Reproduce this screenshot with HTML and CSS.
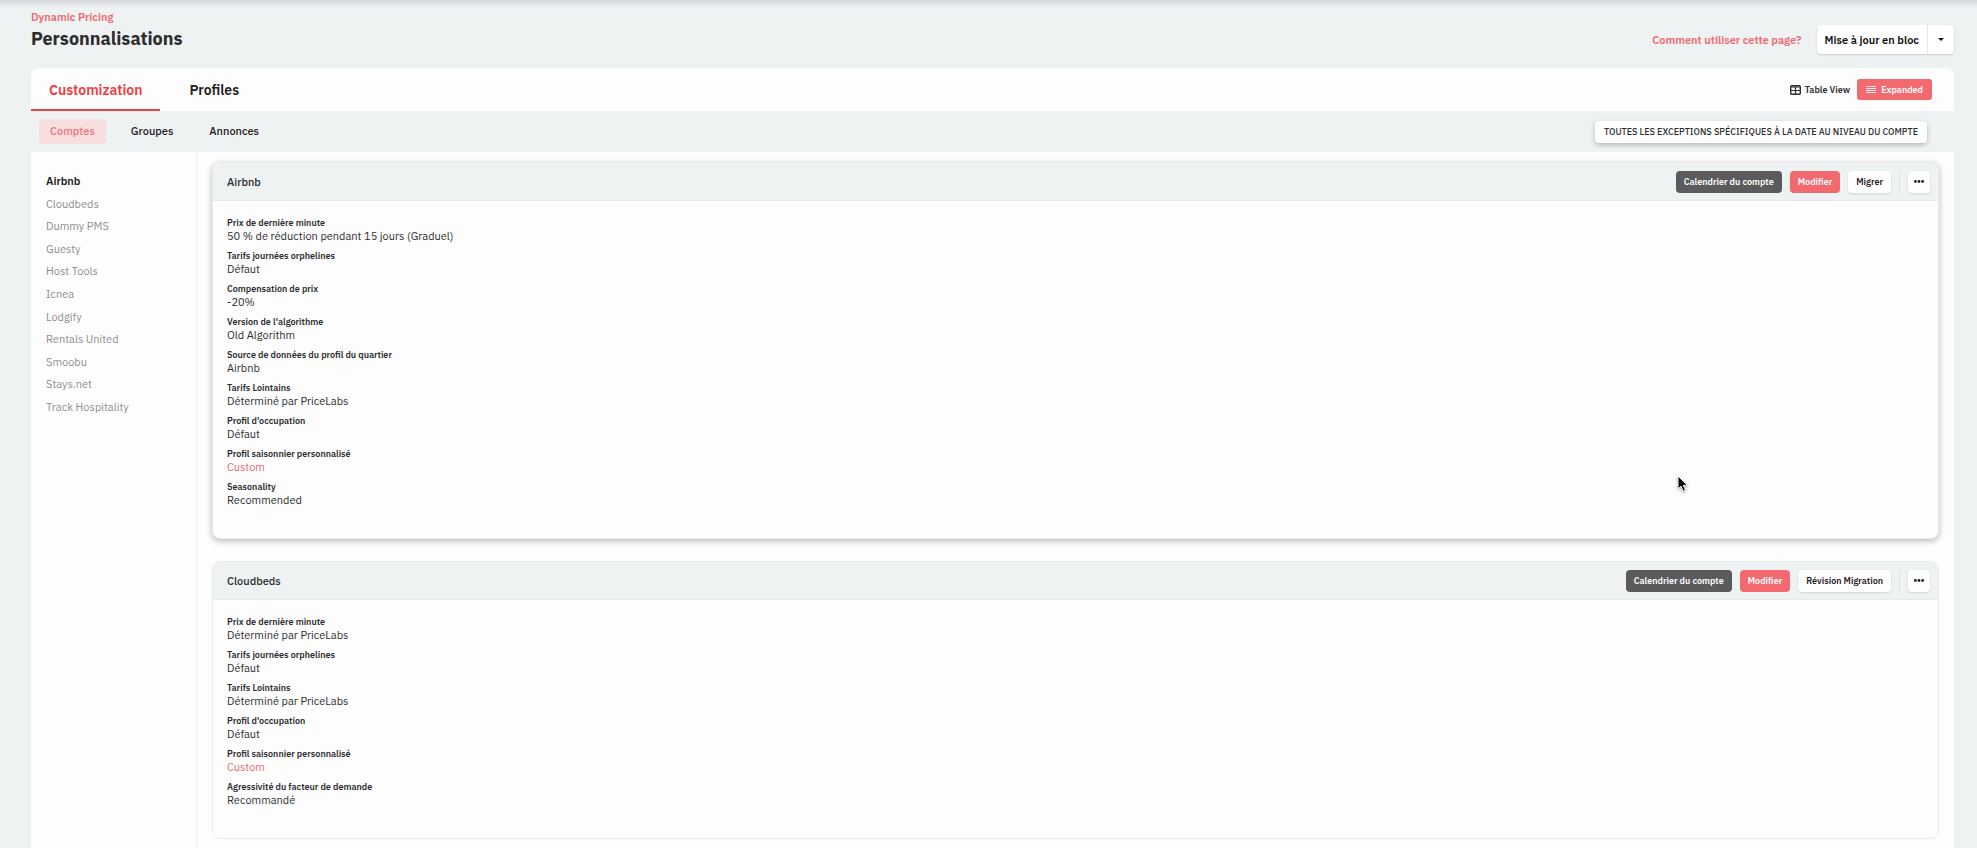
FILE: index.html
```html
<!DOCTYPE html>
<html lang="fr">
<head>
    <meta charset="UTF-8">
    <meta name="viewport" content="width=device-width, initial-scale=1.0">
    <title>Personnalisations</title>
    <link rel="stylesheet" href="styles.css">
</head>
<body>
    <header class="page-header">
        <div>
            <a class="breadcrumb" href="#">Dynamic Pricing</a>
            <h1>Personnalisations</h1>
        </div>
        <div class="header-actions">
            <a class="help-link" href="#">Comment utiliser cette page?</a>
            <div class="split-button">
                <button type="button" class="split-main">Mise à jour en bloc</button>
                <button type="button" class="split-caret" aria-label="Plus d'options">
                    <svg width="6" height="3" viewBox="0 0 6 3"><path d="M0 0h6L3 3z" fill="currentColor"/></svg>
                </button>
            </div>
        </div>
    </header>
    <main class="panel">
        <div class="tabs">
            <nav class="tab-list">
                <a class="tab active" href="#">Customization</a>
                <a class="tab" href="#">Profiles</a>
            </nav>
            <div class="view-switch">
                <button type="button" class="view-button">
                    <svg width="11" height="10" viewBox="0 0 11 10" fill="none" stroke="currentColor"><rect x="0.7" y="0.7" width="9.6" height="8.6" rx="1" stroke-width="1.4"/><path d="M1 2h9" stroke-width="1"/><path d="M1 5.5h9M5.5 2v7" stroke-width="1.2"/></svg>
                    Table View
                </button>
                <button type="button" class="view-button selected">
                    <svg width="10" height="7" viewBox="0 0 10 7" fill="none" stroke="currentColor"><path d="M0 0.5h10M0 2.5h10M0 4.5h10M0 6.5h10" stroke-opacity="0.85"/></svg>
                    Expanded
                </button>
            </div>
        </div>
        <div class="subnav">
            <nav class="subnav-list">
                <a class="subnav-link active" href="#">Comptes</a>
                <a class="subnav-link" href="#">Groupes</a>
                <a class="subnav-link" href="#">Annonces</a>
            </nav>
            <button type="button" class="overrides-button">TOUTES LES EXCEPTIONS SPÉCIFIQUES À LA DATE AU NIVEAU DU COMPTE</button>
        </div>
        <div class="content">
            <aside class="sidebar">
                <ul>
                    <li><a class="active" href="#airbnb">Airbnb</a></li>
                    <li><a href="#cloudbeds">Cloudbeds</a></li>
                    <li><a href="#">Dummy PMS</a></li>
                    <li><a href="#">Guesty</a></li>
                    <li><a href="#">Host Tools</a></li>
                    <li><a href="#">Icnea</a></li>
                    <li><a href="#">Lodgify</a></li>
                    <li><a href="#">Rentals United</a></li>
                    <li><a href="#">Smoobu</a></li>
                    <li><a href="#">Stays.net</a></li>
                    <li><a href="#">Track Hospitality</a></li>
                </ul>
            </aside>
            <div class="cards">
                <section class="card raised" id="airbnb">
                    <div class="card-header">
                        <h2>Airbnb</h2>
                        <div class="card-actions">
                            <button type="button" class="btn btn-dark">Calendrier du compte</button>
                            <button type="button" class="btn btn-red">Modifier</button>
                            <button type="button" class="btn btn-white">Migrer</button>
                            <span class="divider"></span>
                            <button type="button" class="btn-more" aria-label="Plus">
                                <svg width="10" height="3" viewBox="0 0 10 3" fill="currentColor"><circle cx="1.4" cy="1.5" r="1.4"/><circle cx="5" cy="1.5" r="1.4"/><circle cx="8.6" cy="1.5" r="1.4"/></svg>
                            </button>
                        </div>
                    </div>
                    <dl class="settings">
                        <div><dt>Prix de dernière minute</dt><dd>50 % de réduction pendant 15 jours (Graduel)</dd></div>
                        <div><dt>Tarifs journées orphelines</dt><dd>Défaut</dd></div>
                        <div><dt>Compensation de prix</dt><dd>-20%</dd></div>
                        <div><dt>Version de l'algorithme</dt><dd>Old Algorithm</dd></div>
                        <div><dt>Source de données du profil du quartier</dt><dd>Airbnb</dd></div>
                        <div><dt>Tarifs Lointains</dt><dd>Déterminé par PriceLabs</dd></div>
                        <div><dt>Profil d'occupation</dt><dd>Défaut</dd></div>
                        <div><dt>Profil saisonnier personnalisé</dt><dd><a href="#">Custom</a></dd></div>
                        <div><dt>Seasonality</dt><dd>Recommended</dd></div>
                    </dl>
                </section>
                <section class="card" id="cloudbeds">
                    <div class="card-header">
                        <h2>Cloudbeds</h2>
                        <div class="card-actions">
                            <button type="button" class="btn btn-dark">Calendrier du compte</button>
                            <button type="button" class="btn btn-red">Modifier</button>
                            <button type="button" class="btn btn-white">Révision Migration</button>
                            <span class="divider"></span>
                            <button type="button" class="btn-more" aria-label="Plus">
                                <svg width="10" height="3" viewBox="0 0 10 3" fill="currentColor"><circle cx="1.4" cy="1.5" r="1.4"/><circle cx="5" cy="1.5" r="1.4"/><circle cx="8.6" cy="1.5" r="1.4"/></svg>
                            </button>
                        </div>
                    </div>
                    <dl class="settings">
                        <div><dt>Prix de dernière minute</dt><dd>Déterminé par PriceLabs</dd></div>
                        <div><dt>Tarifs journées orphelines</dt><dd>Défaut</dd></div>
                        <div><dt>Tarifs Lointains</dt><dd>Déterminé par PriceLabs</dd></div>
                        <div><dt>Profil d'occupation</dt><dd>Défaut</dd></div>
                        <div><dt>Profil saisonnier personnalisé</dt><dd><a href="#">Custom</a></dd></div>
                        <div><dt>Agressivité du facteur de demande</dt><dd>Recommandé</dd></div>
                    </dl>
                </section>
            </div>
        </div>
    </main>
    <svg class="cursor" width="12" height="18" viewBox="0 0 12 18"><path d="M1 1v13l3-2.8 2.2 5.1 2.3-1-2.2-5h4.2z" fill="#000" stroke="#fff" stroke-width="1"/></svg>
</body>
</html>
```

FILE: styles.css
```css
* {
    box-sizing: border-box;
}

body {
    margin: 0;
    height: 100vh;
    display: flex;
    flex-direction: column;
    overflow: hidden;
    padding: 0 23px 0 31px;
    background: linear-gradient(#d3d5d9, #eff2f3 8px);
    color: #2b2d2e;
    font-family: "IBM Plex Sans", Roboto, sans-serif;
    font-size: 11px;
}

a {
    color: inherit;
    text-decoration: none;
}

button {
    border: none;
    padding: 0;
    background: none;
    color: inherit;
    font: inherit;
    font-weight: 600;
    cursor: pointer;
}

h1, h2, ul, dl, dd {
    margin: 0;
    padding: 0;
}

.page-header {
    flex-shrink: 0;
    display: flex;
    justify-content: space-between;
    align-items: flex-start;
    height: 68px;
    padding-top: 10px;
}

.breadcrumb {
    display: block;
    color: #ef6a70;
    font-weight: 600;
    line-height: 15px;
}

h1 {
    font-size: 18px;
    font-weight: 700;
    line-height: 28px;
}

.header-actions {
    display: flex;
    align-items: center;
    gap: 15px;
    padding-top: 15px;
}

.help-link {
    color: #ef6a70;
    font-size: 11px;
    font-weight: 600;
}

.split-button {
    display: flex;
    height: 29px;
    border-radius: 4px;
    background-color: #fff;
    box-shadow: 0 1px 2px #c8cbcc;
    color: #111;
}

.split-main {
    padding: 0 8px;
    border-right: 1px solid #e6e8e8;
}

.split-caret {
    display: flex;
    align-items: center;
    justify-content: center;
    width: 26px;
}

.panel {
    flex: 1 0 auto;
    display: flex;
    flex-direction: column;
    border-radius: 8px 8px 0 0;
    background-color: #fefdfe;
}

.tabs {
    display: flex;
    justify-content: space-between;
    align-items: center;
    height: 43px;
    padding-right: 22px;
}

.tab-list {
    display: flex;
    align-self: stretch;
}

.tab {
    display: flex;
    align-items: center;
    padding: 3px 18px 0;
    margin-right: 11px;
    border-bottom: 2px solid transparent;
    color: #1f2021;
    font-size: 14px;
    font-weight: 600;
}

.tab.active {
    border-bottom-color: #e8454a;
    color: #f23a40;
}

.view-switch {
    display: flex;
    align-items: center;
    gap: 7px;
}

.view-button {
    display: flex;
    align-items: center;
    gap: 4px;
    height: 21px;
    font-size: 9px;
}

.view-button.selected {
    gap: 5px;
    padding: 0 9px;
    border-radius: 3px;
    background-color: #f2696f;
    color: #fff;
}

.subnav {
    display: flex;
    justify-content: space-between;
    align-items: center;
    height: 41px;
    padding: 0 27px 0 8px;
    background-color: #eff2f3;
}

.subnav-list {
    display: flex;
    gap: 14px;
}

.subnav-link {
    padding: 0 11px;
    border-radius: 3px;
    color: #1f2021;
    font-weight: 500;
    line-height: 25px;
}

.subnav-link.active {
    background-color: #f8dfdf;
    color: #ef7378;
}

.overrides-button {
    height: 22px;
    padding: 0 9px;
    border-radius: 4px;
    background-color: #fff;
    box-shadow: 0 2px 5px #b4b7b8;
    font-size: 9px;
    font-weight: 500;
}

.content {
    flex: 1;
    display: flex;
}

.sidebar {
    width: 166px;
    padding: 18px 15px;
    border-right: 1px solid #eceeef;
}

.sidebar ul {
    display: grid;
    grid-auto-rows: 1fr;
    align-items: center;
    min-height: 248px;
    list-style: none;
    color: #8c8e8f;
}

.sidebar .active {
    color: #1f2021;
    font-weight: 600;
}

.cards {
    flex: 1;
    display: flex;
    flex-direction: column;
    gap: 22px;
    padding: 10px 15px 9px;
}

.card {
    border: 1px solid #e9eced;
    border-radius: 8px;
    background-color: #fefdfe;
}

.card.raised {
    box-shadow: 0 2px 6px #b5b7b7;
}

.card-header {
    display: flex;
    justify-content: space-between;
    align-items: center;
    height: 38px;
    padding: 0 8px 0 14px;
    border-bottom: 1px solid #e6e9ea;
    border-radius: 7px 7px 0 0;
    background-color: #eff2f3;
}

.card-header h2 {
    font-size: 11px;
    font-weight: 500;
}

.card-actions {
    display: flex;
    align-items: center;
    gap: 8px;
}

.btn,
.btn-more {
    height: 22px;
    border-radius: 4px;
    font-size: 9px;
}

.btn {
    padding: 0 8px;
}

.btn-dark {
    background-color: #5b5a5c;
    color: #fff;
}

.btn-red {
    background-color: #f2696f;
    color: #fff;
}

.btn-white,
.btn-more {
    background-color: #fff;
    box-shadow: 0 1px 2px #d0d3d4;
    color: #1f2021;
}

.btn-more {
    display: flex;
    align-items: center;
    justify-content: center;
    width: 22px;
}

.divider {
    width: 1px;
    height: 22px;
    background-color: #dfe2e3;
}

.settings {
    display: flex;
    flex-direction: column;
    gap: 6px;
    padding: 15px 14px 31px;
}

.settings dt {
    font-size: 9px;
    font-weight: 600;
    line-height: 14px;
}

.settings dd {
    line-height: 13px;
}

.settings dd a {
    color: #e8696e;
}

/* mouse pointer lying over the first card */
.cursor {
    position: absolute;
    top: 475px;
    left: 1677px;
    filter: drop-shadow(0 1px 1px #999);
}
```
